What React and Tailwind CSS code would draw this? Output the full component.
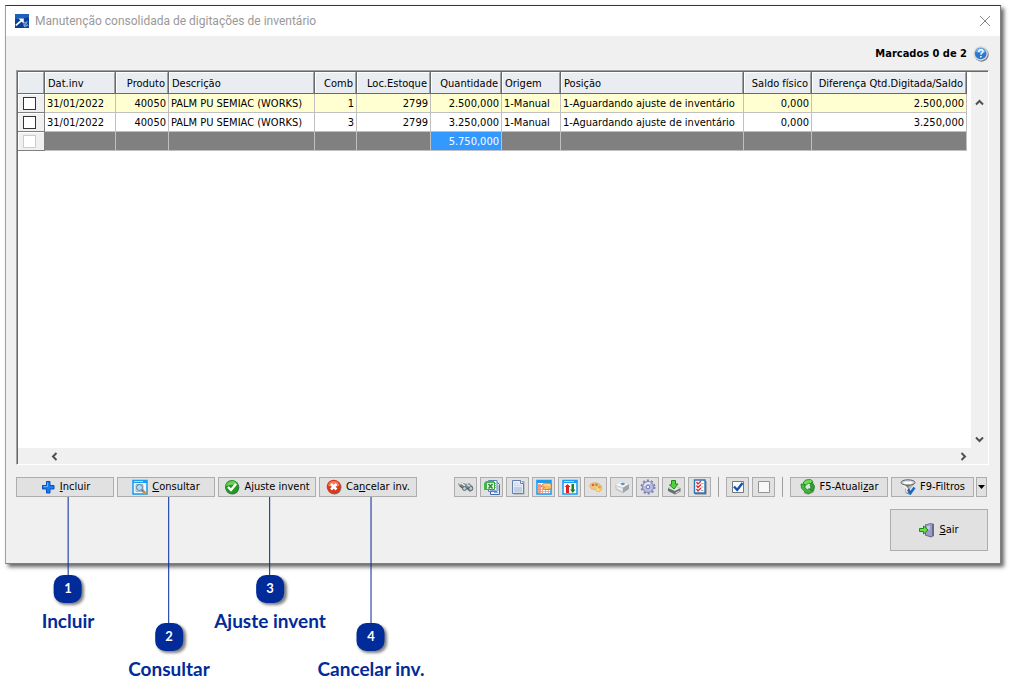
import {useState} from 'react';

const columns = [
	{key:'date', label:'Dat.inv', align:'text-left'},
	{key:'product', label:'Produto', align:'text-right'},
	{key:'description', label:'Descrição', align:'text-left'},
	{key:'comb', label:'Comb', align:'text-right'},
	{key:'place', label:'Loc.Estoque', align:'text-right'},
	{key:'amount', label:'Quantidade', align:'text-right'},
	{key:'origin', label:'Origem', align:'text-left'},
	{key:'position', label:'Posição', align:'text-left'},
	{key:'balance', label:'Saldo físico', align:'text-right'},
	{key:'difference', label:'Diferença Qtd.Digitada/Saldo', align:'text-right'},
];

const rows = [
	{date:'31/01/2022', product:'40050', description:'PALM PU SEMIAC (WORKS)', comb:'1', place:'2799', amount:'2.500,000',
	origin:'1-Manual', position:'1-Aguardando ajuste de inventário', balance:'0,000', difference:'2.500,000'},
	{date:'31/01/2022', product:'40050', description:'PALM PU SEMIAC (WORKS)', comb:'3', place:'2799', amount:'3.250,000',
	origin:'1-Manual', position:'1-Aguardando ajuste de inventário', balance:'0,000', difference:'3.250,000'},
];

function Svg({children, size = 'h-4 w-4'}) {
	return (
		<svg viewBox="0 0 16 16" className={`${size} shrink-0`} fill="none" aria-hidden="true">
			{children}
		</svg>
	)
}

function AppLogo() {
	return (
		<Svg size="h-[14px] w-[14px]">
			<rect width="16" height="16" fill="#0b3f94"/>
			<path d="M0 0h16v4L0 6z" fill="#1c62bd"/>
			<path d="M1 13l7-6" stroke="#fff" strokeWidth="2"/>
			<path d="M4 5h6v6L8 9 6 7z" fill="#fff"/>
			<path d="M11 15l-1-3 2 1-1-4 2 2 1-3M12 15l2-3 1 2" stroke="#9cc4ee"/>
		</Svg>
	)
}

function HelpIcon() {
	return (
		<Svg>
			<circle cx="8.5" cy="8.5" r="7.2" fill="#777"/>
			<circle cx="7.7" cy="7.5" r="7.2" fill="#d3d8dd"/>
			<circle cx="7.7" cy="7.5" r="5.8" fill="#2879cf"/>
			<path d="M2.5 6a5.3 5.3 0 0 1 10.4 0q-5 2-10.4 0z" fill="#68aaf0"/>
			<path d="M5.7 6c0-3 4.3-3 4.3-.5 0 1.5-2.1 1.5-2.1 3.2M7.9 10v1.5" stroke="#fff" strokeWidth="1.5"/>
		</Svg>
	)
}

function PlusIcon() {
	return (
		<Svg>
			<path d="M6.5 2.5H10v4h4V10h-4v4H6.500v-4h-4V6.500h4z" fill="#1b7df0" stroke="#0a4cb8"/>
			<path d="M7.5 3.5v4h-4" stroke="#68b4ff"/>
		</Svg>
	)
}

function SearchWindowIcon() {
	return (
		<Svg>
			<path d="M1 1.5h14V15H1z" fill="#eef5fb" stroke="#149bf3" strokeWidth="1.5"/>
			<path d="M1 1h14v3H1z" fill="#189cf5"/>
			<path d="M2 2.5h9" stroke="#a7e0ff"/>
			<path d="M4 5.5h7v7H4z" fill="#dce4ea" stroke="#aab7c2"/>
			<circle cx="7.5" cy="8.5" r="3" fill="#a6e2fa" stroke="#617a95"/>
			<path d="M10 11l4 4" stroke="#e18b38" strokeWidth="2.5"/>
			<path d="M10 11l1 1" stroke="#5a6070" strokeWidth="1.5"/>
		</Svg>
	)
}

function OkIcon() {
	return (
		<Svg>
			<circle cx="8.3" cy="8.5" r="7" fill="#4d6b4d"/>
			<circle cx="7.8" cy="7.8" r="6.8" fill="#1f9a22"/>
			<path d="M2 7a6 6 0 0 1 11.5-1Q8 5 2 7z" fill="#6fcf57"/>
			<path d="M4 8l3 3 5-6" stroke="#fff" strokeWidth="2.4"/>
		</Svg>
	)
}

function CancelIcon() {
	return (
		<Svg>
			<circle cx="8.5" cy="8.5" r="7" fill="#847068"/>
			<circle cx="7.7" cy="7.7" r="7" fill="#d8381b"/>
			<path d="M2 7a5.8 5.8 0 0 1 11.5 0Q8 8 2 7z" fill="#f47a55"/>
			<path d="M5 5l5.5 5.5M10.5 5L5 10.5" stroke="#fff" strokeWidth="2.6"/>
		</Svg>
	)
}

function BinocularsIcon() {
	return (
		<Svg>
			<path d="M0 4.500l3-1L9 5l2-1 4 3.500V11l-3 2-3-2.500-3 1L1 7z" fill="#868d92"/>
			<path d="M1 4.500l3 0 3 2.500M9 5.500l4 2.500" stroke="#e4e8ea" strokeWidth="1.3"/>
			<path d="M2 7l3 2M9 9l2 1" stroke="#44494d"/>
			<circle cx="6.5" cy="9.5" r="2" fill="#a8d3e4" stroke="#50575d" strokeWidth=".8"/>
			<circle cx="12.8" cy="9.5" r="2" fill="#a8d3e4" stroke="#50575d" strokeWidth=".8"/>
		</Svg>
	)
}

function ExcelIcon() {
	return (
		<Svg>
			<path d="M6.5 3.5h7l2 2v10h-9z" fill="#e6effc" stroke="#416db0"/>
			<path d="M4.5 1.500H13v11H4.500z" fill="#fff" stroke="#5880bd"/>
			<path d="M10 4.500h2M10 6.500h2M10 8.500h2M6 11.500h6M10 13.500h4M14 6v6" stroke="#8aa9d5"/>
			<path d="M2.5 3h8v7.500h-8z" fill="#e4f5dc" stroke="#36a537"/>
			<path d="M0 4.500L2 2h8v2H3v7H0z" fill="#42b646"/>
			<path d="M4.500 5l4 4.500M8.500 5l-4 4.500" stroke="#238a28" strokeWidth="1.5"/>
		</Svg>
	)
}

function DocumentIcon() {
	return (
		<Svg>
			<path d="M3.5 2h11v13.500h-11z" fill="#a5a9b0"/>
			<path d="M2.5 1.500h8l3 3v10h-11z" fill="#e4ebf7" stroke="#667fae"/>
			<path d="M10.5 1.500v3h3" fill="#fff" stroke="#667fae"/>
			<path d="M4 4.500h4M4 6.500h8" stroke="#c9d6ec"/>
			<path d="M4 8h8v5.500H4z" fill="#bfcde6"/>
		</Svg>
	)
}

function HandIcon() {
	return (
		<Svg>
			<path d="M1 1.5h14V15H1z" fill="#fff" stroke="#149bf3" strokeWidth="1.5"/>
			<path d="M1 1h14v3H1z" fill="#189cf5"/>
			<path d="M2 5h3v9H2z" fill="#f4a08c"/>
			<path d="M3.5 5v9M6.500 9v5M9.500 10v4M12.500 11v3M2 7.500h4M2 10.500h12M5 12.500h9" stroke="#ec9483" strokeWidth=".8"/>
			<path d="M5.500 6.500l3-2.500H12l3.500 1v4.500L12 10.500H8.500L7 9.500l1.500-1.500-3 0z" fill="#f9bd68" stroke="#b57a34" strokeWidth=".8"/>
			<path d="M8 6h6" stroke="#ffe7b8"/>
		</Svg>
	)
}

function SortIcon() {
	return (
		<Svg>
			<path d="M1 1.5h14V15H1z" fill="#fff" stroke="#149bf3" strokeWidth="1.5"/>
			<path d="M1 1h14v3H1z" fill="#189cf5"/>
			<path d="M2 2.5h10" stroke="#9bdcff"/>
			<path d="M4 14V8H2.500L5.500 5l3 3H7v6z" fill="#e31c1c"/>
			<path d="M9.500 5H12v5.500h1.500L10.800 14 8 10.500h1.500z" fill="#178033"/>
		</Svg>
	)
}

function PaletteIcon() {
	return (
		<Svg>
			<path d="M2 6c1-3 7-3 10-.5 3 2.500 2 7-1.500 7-2.500 0-2-2-4-2C4 10.500 1 9 2 6z" fill="#f5c777" stroke="#d0a158" strokeWidth=".6"/>
			<circle cx="5" cy="6" r="1.3" fill="#e9573f"/>
			<circle cx="8.500" cy="5.800" r="1.3" fill="#6fa84b"/>
			<circle cx="11.500" cy="8" r="1.3" fill="#e8955b"/>
			<circle cx="10" cy="10.700" r="1.2" fill="#f7f07a"/>
		</Svg>
	)
}

function PrinterIcon() {
	return (
		<Svg>
			<path d="M1 6l6-3.500 8 2.500v5l-6 4-7-3.500z" fill="#a0a4a7"/>
			<path d="M1 6l6-3.500 8 2.500-6 3.500z" fill="#f4f5f6"/>
			<path d="M1 6l8 2.500v5l-7-3.500z" fill="#d8dadc"/>
			<path d="M6 4.500l3-1 2.500 1.500-3 1.500z" fill="#4e9ad5"/>
			<path d="M4 9l4 1.500" stroke="#fff"/>
		</Svg>
	)
}

function GearIcon() {
	return (
		<Svg>
			<circle cx="8" cy="8" r="6.500" stroke="#8083b5" strokeWidth="2" strokeDasharray="2.1 2"/>
			<circle cx="8" cy="8" r="5.500" fill="#b9bce2" stroke="#8083b5"/>
			<path d="M4.500 7a4 4 0 0 1 6-2.500" stroke="#e7e8fa" strokeWidth="1.5"/>
			<circle cx="8" cy="8" r="1.800" fill="#eee" stroke="#777aa9"/>
		</Svg>
	)
}

function ImportIcon() {
	return (
		<Svg>
			<path d="M2 9l5-2 7.500 2v3.500l-5.500 3-7-3.500z" fill="#6b6f72"/>
			<path d="M2 9l5-2 7.500 2L9 12z" fill="#e2e4e5"/>
			<path d="M9.500 14l4-2" stroke="#ddd"/>
			<path d="M5.500 1.500h4V5H12L8 10 3.500 6l2-.5z" fill="#4fd33a" stroke="#22861d"/>
		</Svg>
	)
}

function ChecklistIcon() {
	return (
		<Svg>
			<path d="M3 2h11.500v13.500H3z" fill="#777"/>
			<path d="M2.500 1H13v13H2.500z" fill="#fff" stroke="#2674bd" strokeWidth="1.4"/>
			<path d="M4.500 3L6 5l3-3M4.500 6.500L6 8.500l3-3M4.500 10L6 12l3-3" stroke="#dc2929" strokeWidth="1.3"/>
			<path d="M9 4.500h2.500M9 8h2.500M9 11.500h2.500" stroke="#aaa"/>
		</Svg>
	)
}

function MarkAllIcon() {
	return (
		<Svg>
			<path d="M2.500 2.500h11v11h-11z" fill="#fff" stroke="#777"/>
			<path d="M4 7.500l3.200 3.500L12.500 4" stroke="#1452b5" strokeWidth="2.4"/>
		</Svg>
	)
}

function MarkNoneIcon() {
	return (
		<Svg>
			<path d="M2.500 2.500h11v11h-11z" fill="#f8f8f8" stroke="#929292"/>
		</Svg>
	)
}

function RefreshIcon() {
	return (
		<Svg>
			<path d="M4 13.500l4 1.500 5-2 1.500-5" stroke="#999" strokeWidth="1.5"/>
			<path d="M3 4l2.500-3 5-.5L13 2.500 11 5 8.500 4 6 6.500z" fill="#6ddc57" stroke="#167b1c" strokeWidth=".8"/>
			<path d="M12 3l2.500 4-1.500 5-3-1.500 1-2.500-1-2z" fill="#2ba531" stroke="#167b1c" strokeWidth=".8"/>
			<path d="M12.500 12L9 14.500l-4-1.500-3.500-4L1 5l4 .5L5 9l2.500 2L9 9.500l1.500 2z" fill="#42bd3a" stroke="#167b1c" strokeWidth=".8"/>
		</Svg>
	)
}

function FunnelIcon() {
	return (
		<Svg>
			<path d="M1 3l4.500 6v5l4.500 2V9.500L15 4z" fill="#85898d"/>
			<path d="M2.500 5L7 9.500v4" stroke="#f3f4f5" strokeWidth="1.8"/>
			<path d="M9 9l4-4" stroke="#b9bdc0" strokeWidth="2"/>
			<ellipse cx="8" cy="3.500" rx="7" ry="2.700" fill="#cdd1d4" stroke="#5f6468"/>
			<ellipse cx="8" cy="3.800" rx="4.500" ry="1.200" fill="#fff"/>
			<path d="M8 10.500l2.500 3.500 4-5.500" stroke="#1766c7" strokeWidth="2.5"/>
		</Svg>
	)
}

function ExitIcon() {
	return (
		<Svg>
			<path d="M6 2.500L12 1l3 1v12l-3 1.500-6-2z" fill="#6a6a86"/>
			<path d="M7 3l6-1.500v13L7 13z" fill="#9a9bca"/>
			<path d="M8 4l3-.5v4L8 8z" fill="#c4c5ea"/>
			<path d="M.5 6.500h4V4L9 8l-4.500 4V9.500h-4z" fill="#6de13f" stroke="#23871b"/>
		</Svg>
	)
}

const actions = [
	{before:'', hot:'I', after:'ncluir', icon:PlusIcon, number:1, title:'Incluir', line:'h-[78px]'},
	{before:'', hot:'C', after:'onsultar', icon:SearchWindowIcon, number:2, title:'Consultar', line:'h-[126px]'},
	{before:'A', hot:'j', after:'uste invent', icon:OkIcon, number:3, title:'Ajuste invent', line:'h-[78px]'},
	{before:'Ca', hot:'n', after:'celar inv.', icon:CancelIcon, number:4, title:'Cancelar inv.', line:'h-[126px]'},
];

const tools = [
	{name:'Localizar', icon:BinocularsIcon},
	{name:'Exportar para Excel', icon:ExcelIcon},
	{name:'Documento', icon:DocumentIcon},
	{name:'Selecionar colunas', icon:HandIcon},
	{name:'Ordenar', icon:SortIcon},
	{name:'Cores', icon:PaletteIcon},
	{name:'Imprimir', icon:PrinterIcon},
	{name:'Configurar', icon:GearIcon},
	{name:'Importar', icon:ImportIcon},
	{name:'Conferir', icon:ChecklistIcon},
];

function ToolButton({name, icon:Icon, onClick}) {
	return (
		<button aria-label={name} onClick={onClick}
		className="flex h-5 w-[23px] items-center justify-center border border-[#adadad] bg-[#e1e1e1]">
			<Icon/>
		</button>
	)
}

function Chevron({d}) {
	return (
		<svg viewBox="0 0 9 9" className="h-[9px] w-[9px]" fill="none" aria-hidden="true">
			<path d={d} stroke="#505050" strokeWidth="2"/>
		</svg>
	)
}

function RowCheck({label, checked, onChange, disabled}) {
	return (
		<td className="border-r border-b border-[#808080] bg-[#f0f0f0] p-0">
			<div className="flex h-[18px] items-center border-t border-l border-white pl-1">
				<input type="checkbox" aria-label={label} checked={checked} onChange={onChange} disabled={disabled}
				className="h-[13px] w-[13px] appearance-none border border-[#333] bg-white checked:bg-[#1452b5] disabled:border-[#ccc]"/>
			</div>
		</td>
	)
}

function InventoryTable({marked, toggle}) {
	return (
		<table className="w-full table-fixed border-separate border-spacing-0 leading-[14px]">
			<colgroup>
				<col className="w-[27px]"/>
				<col className="w-[71px]"/>
				<col className="w-[53px]"/>
				<col className="w-[146px]"/>
				<col className="w-[42px]"/>
				<col className="w-[74px]"/>
				<col className="w-[71px]"/>
				<col className="w-[59px]"/>
				<col className="w-[183px]"/>
				<col className="w-[68px]"/>
				<col/>
			</colgroup>
			<thead>
				<tr>
					<th className="border-r border-b border-[#696969] p-0">
						<div className="h-[21px] border-t border-l border-r border-t-white border-l-white border-r-[#a0a0a0] bg-[#e9edf1]"/>
					</th>
					{
						columns.map((col)=>(
							<th key={col.key} className={`border-r border-b border-[#696969] p-0 font-normal ${col.align}`}>
								<div className="h-[21px] border-t border-l border-r border-t-white border-l-white border-r-[#a0a0a0] 
								bg-[#e9edf1] px-[2px] pt-1 whitespace-nowrap">{col.label}</div>
							</th>
						))
					}
				</tr>
			</thead>
			<tbody>
				{
					rows.map((row,r)=>(
						<tr key={r} className={r === 0 ? 'bg-[#ffffd2]' : 'bg-white'}>
							<RowCheck label={`Marcar linha ${r + 1}`} checked={marked[r]} onChange={()=>toggle(r)}/>
							{
								columns.map((col)=>(
									<td key={col.key} className={`h-[19px] border-r border-b border-[#c0c0c0] px-[2px] pt-[2px] pb-0 
									whitespace-nowrap ${col.align}`}>{row[col.key]}</td>
								))
							}
						</tr>
					))
				}
				<tr className="bg-[#808080] text-white">
					<RowCheck label="Total" checked={false} disabled/>
					{
						columns.map((col)=>(
							<td key={col.key} className={`h-[19px] border-r border-b border-[#c0c0c0] px-[2px] pt-[2px] pb-0 text-right
							${col.key === 'amount' ? 'bg-[#3399ff]' : ''}`}>{col.key === 'amount' ? '5.750,000' : ''}</td>
						))
					}
				</tr>
			</tbody>
		</table>
	)
}

function Callout({number, title, line}) {
	return (
		<div className="pointer-events-none absolute top-full left-[52px] z-10 flex -translate-x-1/2 flex-col items-center text-[#002b99]">
			<div className={`w-px bg-[#002b99] ${line}`}/>
			<span className="flex h-7 w-7 items-center justify-center rounded-[10px] bg-[#002b99] font-['Lato',sans-serif] text-[13px] font-bold 
			text-white shadow-[2px_2px_3px_rgba(0,0,0,0.5)]">{number}</span>
			<span className="mt-[6px] font-['Lato',sans-serif] text-[19px] leading-6 font-bold whitespace-nowrap">{title}</span>
		</div>
	)
}

export default function App() {

	const [marked,setMarked] = useState([false,false]);

	const toggle = (r) => setMarked(marked.map((m,i)=>(i === r ? !m : m)));

	return (
		<main className="min-h-screen bg-white pt-[5px] pr-[23px] pl-[5px] font-['DejaVu_Sans_Condensed','Noto_Sans',sans-serif] text-[11px] text-black">
			<section className="border border-t-[#2a2aa0] border-r-[#808080] border-b-[#808080] border-l-[#a0a0a0] bg-[#f0f0f0] 
			shadow-[3px_3px_4px_rgba(0,0,0,0.6)]">
				<header className="flex h-[30px] items-center bg-white px-[9px]">
					<AppLogo/>
					<h1 className="ml-[6px] font-['Roboto',sans-serif] text-[12px] text-[#999]">Manutenção consolidada de digitações de inventário</h1>
					<button aria-label="Fechar" className="ml-auto">
						<svg viewBox="0 0 12 12" className="h-3 w-3" aria-hidden="true">
							<path d="M1 1l10 10M11 1L1 11" stroke="#888"/>
						</svg>
					</button>
				</header>

				<div className="pr-[11px] pb-3 pl-[10px]">
					<div className="flex h-[34px] items-center justify-end gap-[6px] pt-[2px]">
						<span className="font-bold">Marcados {marked.filter(Boolean).length} de 2</span>
						<button aria-label="Ajuda"><HelpIcon/></button>
					</div>

					<div className="border border-t-[#a0a0a0] border-r-white border-b-white border-l-[#a0a0a0]">
						<div className="border-t border-l border-[#696969] bg-white">
							<div className="flex min-h-[376px]">
								<div className="mr-1 flex-1">
									<InventoryTable marked={marked} toggle={toggle}/>
								</div>
								<div className="flex w-[17px] flex-col items-center justify-between bg-[#f0f0f0] pt-[26px] pb-1">
									<Chevron d="M1 6.500l3.500-3.500 3.500 3.500"/>
									<Chevron d="M1 2.500l3.500 3.500 3.500-3.500"/>
								</div>
							</div>
							<div className="flex h-4 items-center justify-between bg-[#f0f0f0] pr-5 pl-8">
								<Chevron d="M6.500 1L3 4.500 6.500 8"/>
								<Chevron d="M2.500 1L6 4.500 2.500 8"/>
							</div>
						</div>
					</div>

					<div className="mt-3 flex items-center">
						<div className="flex gap-[3px]">
							{
								actions.map(({icon:Icon, ...action})=>(
									<div key={action.number} className="relative">
										<button className="flex h-5 w-[98px] items-center justify-center gap-1 border border-[#adadad] bg-[#e1e1e1] whitespace-nowrap">
											<Icon/>
											<span>{action.before}<u>{action.hot}</u>{action.after}</span>
										</button>
										<Callout number={action.number} title={action.title} line={action.line}/>
									</div>
								))
							}
						</div>

						<div className="ml-auto flex gap-[3px]">
							{
								tools.map((tool)=>(
									<ToolButton key={tool.name} name={tool.name} icon={tool.icon}/>
								))
							}
						</div>
						<div className="mx-[7px] h-5 w-px bg-[#a0a0a0]"/>
						<div className="flex gap-[3px]">
							<ToolButton name="Marcar todos" icon={MarkAllIcon} onClick={()=>setMarked([true,true])}/>
							<ToolButton name="Desmarcar todos" icon={MarkNoneIcon} onClick={()=>setMarked([false,false])}/>
						</div>
						<div className="mx-[7px] h-5 w-px bg-[#a0a0a0]"/>
						<button className="flex h-5 w-[98px] items-center justify-center gap-1 border border-[#adadad] bg-[#e1e1e1] whitespace-nowrap">
							<RefreshIcon/>
							<span>F5-Atuali<u>z</u>ar</span>
						</button>
						<button className="ml-[3px] flex h-5 w-[83px] items-center justify-center gap-1 border border-[#adadad] bg-[#e1e1e1] whitespace-nowrap">
							<FunnelIcon/>
							<span>F9-Filtros</span>
						</button>
						<button aria-label="Mais filtros" className="mr-[2px] ml-[2px] flex h-5 w-[11px] items-center justify-center border border-[#adadad] bg-[#e1e1e1]">
							<svg viewBox="0 0 7 4" className="h-1 w-[7px] shrink-0" aria-hidden="true"><path d="M0 0h7L3.500 4z" fill="#000"/></svg>
						</button>
					</div>

					<div className="mt-3 flex justify-end pr-px">
						<button className="flex h-[42px] w-[98px] items-center justify-center gap-1 border border-[#adadad] bg-[#e1e1e1]">
							<ExitIcon/>
							<span><u>S</u>air</span>
						</button>
					</div>
				</div>
			</section>
		</main>
	)
}
